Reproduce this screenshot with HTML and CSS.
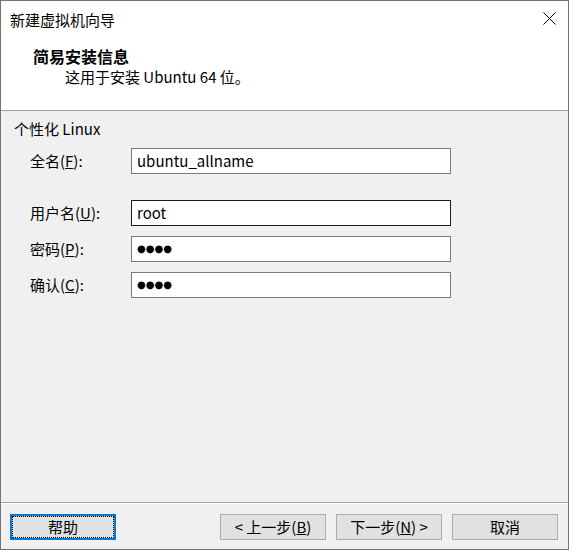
FILE: index.html
```html
<!DOCTYPE html>
<html lang="zh-CN">
<head>
<meta charset="utf-8">
<title>新建虚拟机向导</title>
<link rel="stylesheet" href="styles.css">
</head>
<body>
<div class="window">
  <div class="header">
    <div class="titlebar">
      <span class="title">新建虚拟机向导</span>
      <svg class="close" width="13" height="13" viewBox="0 0 13 13"><path d="M0.5 0.5 L12.5 12.5 M12.5 0.5 L0.5 12.5" stroke="#000" stroke-width="1" fill="none"/></svg>
    </div>
    <div class="heading">简易安装信息</div>
    <div class="subheading">这用于安装 Ubuntu 64 位。</div>
  </div>
  <div class="content">
    <div class="group-title">个性化 Linux</div>
    <div class="field">
      <span class="label">全名(<u>F</u>):</span>
      <div class="input">ubuntu_allname</div>
    </div>
    <div class="field gap-large">
      <span class="label">用户名(<u>U</u>):</span>
      <div class="input focused">root</div>
    </div>
    <div class="field">
      <span class="label">密码(<u>P</u>):</span>
      <div class="input"><span class="dots">●●●●</span></div>
    </div>
    <div class="field">
      <span class="label">确认(<u>C</u>):</span>
      <div class="input"><span class="dots">●●●●</span></div>
    </div>
  </div>
  <div class="footer">
    <div class="btn default">帮助</div>
    <div class="nav">
      <div class="btn">&lt; 上一步(<u>B</u>)</div>
      <div class="btn">下一步(<u>N</u>) &gt;</div>
      <div class="btn">取消</div>
    </div>
  </div>
</div>
</body>
</html>
```

FILE: styles.css
```css
html, body {
  margin: 0;
  padding: 0;
  background: #ffffff;
}

body {
  font-family: "Noto Sans CJK SC", sans-serif;
  font-size: 15px;
  color: #000;
}

.window {
  width: 569px;
  height: 550px;
  box-sizing: border-box;
  border: 1px solid #747474;
  background: #f0f0f0;
  display: flex;
  flex-direction: column;
}

.header {
  height: 110px;
  box-sizing: border-box;
  background: #ffffff;
  border-bottom: 1px solid #a0a0a0;
}

.titlebar {
  display: flex;
  justify-content: space-between;
  align-items: flex-start;
  padding: 0 12px 0 9px;
}

.title {
  line-height: 20px;
  margin-top: 9px;
}

.close {
  display: block;
  margin-top: 11px;
}

.heading {
  font-size: 16px;
  font-weight: bold;
  line-height: 20px;
  margin-top: 16px;
  padding-left: 32px;
}

.subheading {
  line-height: 20px;
  margin-top: 1px;
  padding-left: 64px;
}

.content {
  flex: 1;
  padding: 8px 0 0 0;
}

.group-title {
  line-height: 20px;
  padding-left: 13px;
  margin-bottom: 9px;
}

.field {
  display: flex;
  align-items: center;
  padding-left: 29px;
  margin-bottom: 10px;
}

.field.gap-large {
  margin-top: 26px;
}

.label {
  width: 101px;
  line-height: 20px;
}

.input {
  width: 320px;
  height: 26px;
  box-sizing: border-box;
  border: 1px solid #7a7a7a;
  background: #fff;
  padding-left: 5px;
  display: flex;
  align-items: center;
  line-height: 20px;
}

.input.focused {
  border-color: #1a1a1a;
}

.dots {
  font-family: "DejaVu Sans", sans-serif;
  font-size: 10px;
  letter-spacing: 0px;
}

.footer {
  height: 47px;
  box-sizing: border-box;
  border-top: 1px solid #a0a0a0;
  box-shadow: inset 0 1px 0 #ffffff;
  padding: 11px 10px 0 9px;
  display: flex;
  justify-content: space-between;
  align-items: flex-start;
}

.nav {
  display: flex;
  gap: 10px;
}

.btn {
  width: 106px;
  height: 26px;
  box-sizing: border-box;
  border: 1px solid #adadad;
  background: #e1e1e1;
  display: flex;
  align-items: center;
  justify-content: center;
  line-height: 20px;
}

.btn.default {
  border: 2px solid #0078d7;
  outline: 1px dotted #000;
  outline-offset: -3px;
}
```
